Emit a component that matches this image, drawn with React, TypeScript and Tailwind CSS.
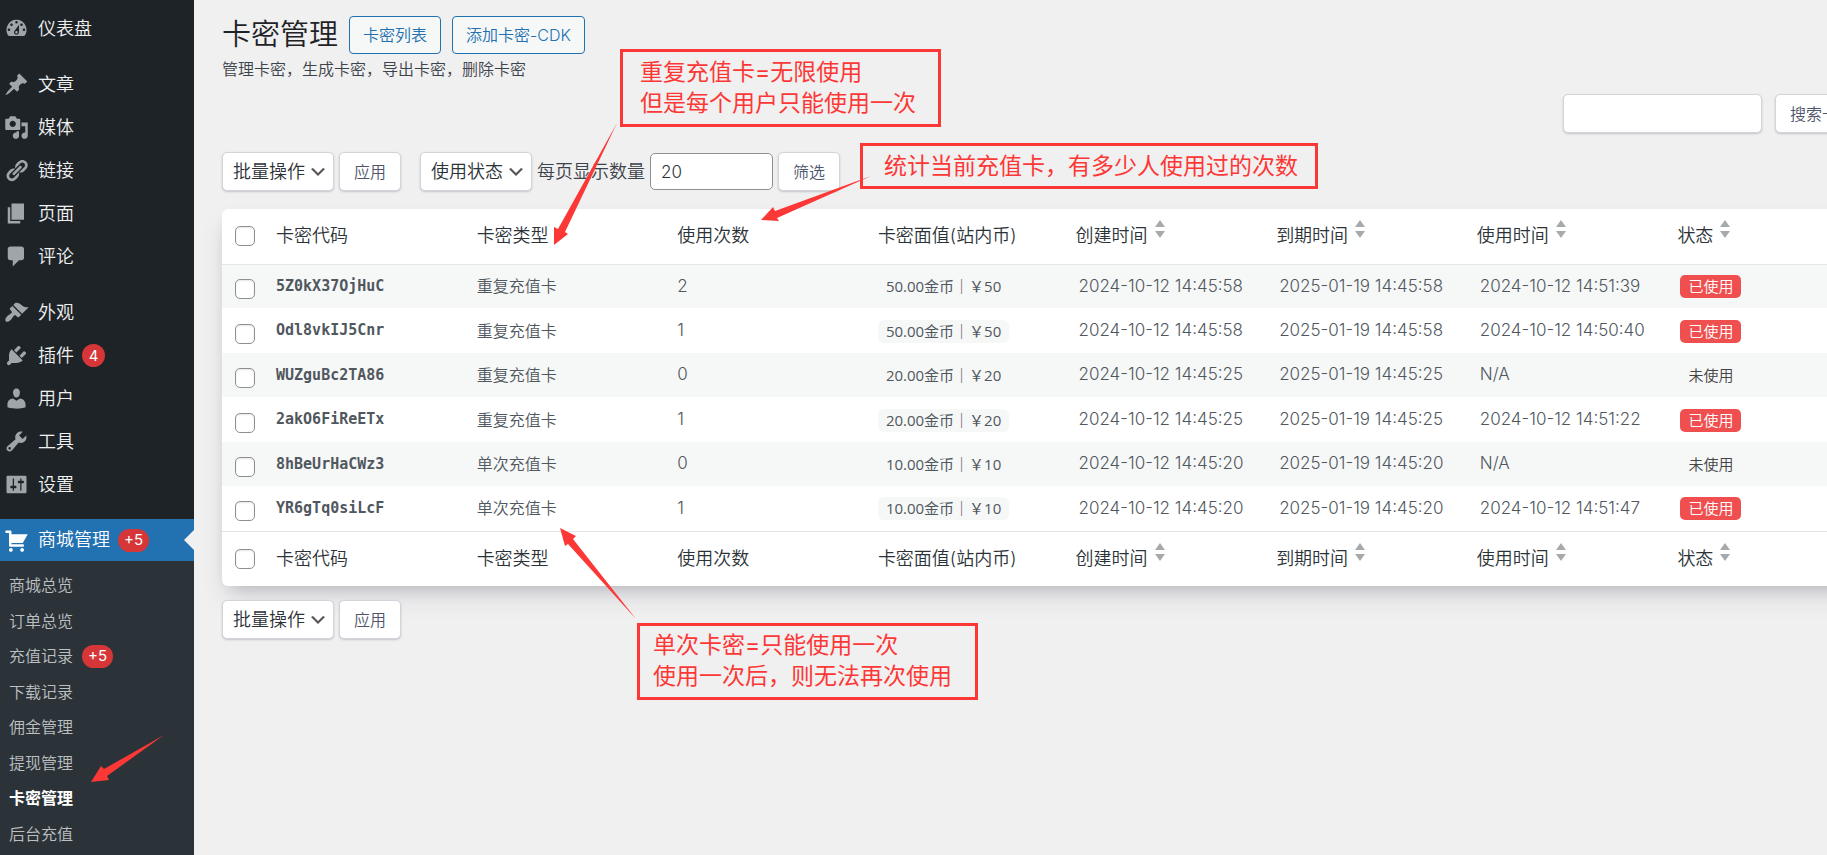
import { useState } from "react";

type MenuItem = {
  label: string;
  icon: string;
  badge?: string;
};

type CardRow = {
  code: string;
  type: string;
  count: number;
  value: string;
  created: string;
  expires: string;
  usedAt: string;
  used: boolean;
};

const icons: Record<string, string> = {
  dashboard:
    "M3.76 16h12.48A7.998 7.998 0 0010 3a7.998 7.998 0 00-6.24 13zM10 4c.55 0 1 .45 1 1s-.45 1-1 1-1-.45-1-1 .45-1 1-1zM6 6c.55 0 1 .45 1 1s-.45 1-1 1-1-.45-1-1 .45-1 1-1zm8 0c.55 0 1 .45 1 1s-.45 1-1 1-1-.45-1-1 .45-1 1-1zm-5.37 5.55L12 7v6c0 1.1-.9 2-2 2s-2-.9-2-2c0-.57.24-1.08.63-1.45zM4 10c.55 0 1 .45 1 1s-.45 1-1 1-1-.45-1-1 .45-1 1-1zm12 0c.55 0 1 .45 1 1s-.45 1-1 1-1-.45-1-1 .45-1 1-1zm-5 3c0-.55-.45-1-1-1s-1 .45-1 1 .45 1 1 1 1-.45 1-1z",
  post: "M10.44 3.02l1.82-1.82 6.36 6.35-1.83 1.82c-1.05-.68-2.48-.57-3.41.36l-.75.75c-.92.93-1.04 2.35-.35 3.41l-1.83 1.82-2.41-2.41-2.8 2.79c-.42.42-3.38 2.71-3.8 2.29s1.86-3.39 2.28-3.81l2.79-2.79L4.1 9.36l1.83-1.82c1.05.69 2.48.57 3.4-.36l.75-.75c.93-.92 1.05-2.35.36-3.41z",
  media:
    "M13 11V4c0-.55-.45-1-1-1h-1.67L9 1H5L3.67 3H2c-.55 0-1 .45-1 1v7c0 .55.45 1 1 1h10c.55 0 1-.45 1-1zM7 4.5c1.38 0 2.5 1.12 2.5 2.5S8.38 9.5 7 9.5 4.5 8.38 4.5 7 5.62 4.5 7 4.5zM14 6h5v10.5c0 1.38-1.12 2.5-2.5 2.5S14 17.88 14 16.5s1.12-2.5 2.5-2.5c.17 0 .34.02.5.05V9h-3V6zm-4 8.05V13h2v3.5c0 1.38-1.12 2.5-2.5 2.5S7 17.88 7 16.5 8.12 14 9.5 14c.17 0 .34.02.5.05z",
  links:
    "M17.74 2.76c1.68 1.69 1.68 4.41 0 6.1l-1.53 1.52c-1.12 1.12-2.7 1.47-4.14 1.09l2.62-2.61.76-.77.76-.76c.84-.84.84-2.2 0-3.04-.84-.85-2.2-.85-3.04 0l-.77.76-3.38 3.38c-.37-1.44-.02-3.02 1.1-4.14l1.52-1.53c1.69-1.68 4.42-1.68 6.1 0zM8.59 13.43l5.34-5.34c.42-.42.42-1.1 0-1.52-.44-.43-1.13-.39-1.53 0l-5.33 5.34c-.42.42-.42 1.1 0 1.52.44.43 1.13.39 1.52 0zm-.76 2.29l4.14-4.15c.38 1.44.03 3.02-1.09 4.14l-1.52 1.53c-1.69 1.68-4.41 1.68-6.1 0-1.68-1.68-1.68-4.42 0-6.1l1.53-1.52c1.12-1.12 2.7-1.47 4.14-1.1l-4.14 4.15c-.85.84-.85 2.2 0 3.05.84.84 2.2.84 3.04 0z",
  page: "M6 15V2h10v13H6zm-1 1h8v2H3V5h2v11z",
  comments:
    "M5 2h9c1.1 0 2 .9 2 2v7c0 1.1-.9 2-2 2h-2l-5 5v-5H5c-1.1 0-2-.9-2-2V4c0-1.1.9-2 2-2z",
  appearance:
    "M14.48 11.06L7.41 3.99l1.5-1.5c.5-.56 2.3-.47 3.51.32 1.21.8 1.43 1.28 2.91 2.1 1.18.64 2.45 1.26 4.45.85zm-.71.71L6.7 4.7 4.93 6.47c-.39.39-.39 1.02 0 1.41l1.06 1.06c.39.39.39 1.03 0 1.42-.6.6-1.43 1.11-2.21 1.69-.35.26-.7.53-1.01.84C1.43 14.23.4 16.08 1.4 17.07c.99 1 2.84-.03 4.18-1.36.31-.31.58-.66.85-1.02.57-.78 1.08-1.61 1.69-2.21.39-.39 1.02-.39 1.41 0l1.06 1.06c.39.39 1.02.39 1.41 0z",
  plugins:
    "M13.11 4.36L9.87 7.6 8 5.73l3.24-3.24c.35-.34 1.05-.2 1.56.32.52.51.66 1.21.31 1.55zm-8 1.77l.91-1.12 9.01 9.01-1.19.84c-.71.71-2.63 1.16-3.82 1.16H6.14L4.9 17.26c-.59.59-1.54.59-2.12 0-.59-.58-.59-1.53 0-2.12l1.24-1.24v-3.88c0-1.13.4-3.19 1.09-3.89zm7.26 3.97l3.24-3.24c.34-.35 1.04-.21 1.55.31.52.51.66 1.21.31 1.55l-3.24 3.25z",
  users:
    "M10 9.25c-2.27 0-2.73-3.44-2.73-3.44C7 4.02 7.82 2 9.97 2c2.16 0 2.98 2.02 2.71 3.81 0 0-.41 3.44-2.68 3.44zm0 2.57L12.72 10c2.39 0 4.52 2.33 4.52 4.53v2.49s-3.65 1.13-7.24 1.13c-3.65 0-7.24-1.13-7.24-1.13v-2.49c0-2.25 1.94-4.48 4.47-4.48z",
  tools:
    "M16.68 9.77c-1.34 1.34-3.3 1.67-4.95.99l-5.41 6.52c-.99.99-2.59.99-3.58 0s-.99-2.59 0-3.57l6.52-5.42c-.68-1.65-.35-3.61.99-4.95 1.28-1.28 3.12-1.62 4.72-1.06l-2.89 2.89 2.82 2.82 2.86-2.87c.53 1.58.18 3.39-1.08 4.65zM3.81 16.21c.4.39 1.04.39 1.43 0 .4-.4.4-1.04 0-1.43-.39-.4-1.03-.4-1.43 0-.39.39-.39 1.03 0 1.43z",
  settings:
    "M18 16V4c0-.55-.45-1-1-1H3c-.55 0-1 .45-1 1v12c0 .55.45 1 1 1h14c.55 0 1-.45 1-1zM8 11h1c.55 0 1 .45 1 1s-.45 1-1 1H8v1.5c0 .28-.22.5-.5.5s-.5-.22-.5-.5V13H6c-.55 0-1-.45-1-1s.45-1 1-1h1V5.5c0-.28.22-.5.5-.5s.5.22.5.5V11zm5-2h-1c-.55 0-1-.45-1-1s.45-1 1-1h1V5.5c0-.28.22-.5.5-.5s.5.22.5.5V7h1c.55 0 1 .45 1 1s-.45 1-1 1h-1v5.5c0 .28-.22.5-.5.5s-.5-.22-.5-.5V9z",
  cart: "M6 13h9c.55 0 1 .45 1 1s-.45 1-1 1H5c-.55 0-1-.45-1-1V4H2c-.55 0-1-.45-1-1s.45-1 1-1h3c.55 0 1 .45 1 1v2h13l-4 7H6v1zm-.5 3c.83 0 1.5.67 1.5 1.5S6.33 19 5.5 19 4 18.33 4 17.5 4.67 16 5.5 16zm9 0c.83 0 1.5.67 1.5 1.5s-.67 1.5-1.5 1.5-1.5-.67-1.5-1.5.67-1.5 1.5-1.5z",
};

const menuGroups: MenuItem[][] = [
  [{ label: "仪表盘", icon: "dashboard" }],
  [
    { label: "文章", icon: "post" },
    { label: "媒体", icon: "media" },
    { label: "链接", icon: "links" },
    { label: "页面", icon: "page" },
    { label: "评论", icon: "comments" },
  ],
  [
    { label: "外观", icon: "appearance" },
    { label: "插件", icon: "plugins", badge: "4" },
    { label: "用户", icon: "users" },
    { label: "工具", icon: "tools" },
    { label: "设置", icon: "settings" },
  ],
];

const shopMenu = [
  { label: "商城总览" },
  { label: "订单总览" },
  { label: "充值记录", badge: "+5" },
  { label: "下载记录" },
  { label: "佣金管理" },
  { label: "提现管理" },
  { label: "卡密管理", current: true },
  { label: "后台充值" },
];

const rows: CardRow[] = [
  { code: "5Z0kX37OjHuC", type: "重复充值卡", count: 2, value: "50.00金币｜￥50", created: "2024-10-12 14:45:58", expires: "2025-01-19 14:45:58", usedAt: "2024-10-12 14:51:39", used: true },
  { code: "Odl8vkIJ5Cnr", type: "重复充值卡", count: 1, value: "50.00金币｜￥50", created: "2024-10-12 14:45:58", expires: "2025-01-19 14:45:58", usedAt: "2024-10-12 14:50:40", used: true },
  { code: "WUZguBc2TA86", type: "重复充值卡", count: 0, value: "20.00金币｜￥20", created: "2024-10-12 14:45:25", expires: "2025-01-19 14:45:25", usedAt: "N/A", used: false },
  { code: "2akO6FiReETx", type: "重复充值卡", count: 1, value: "20.00金币｜￥20", created: "2024-10-12 14:45:25", expires: "2025-01-19 14:45:25", usedAt: "2024-10-12 14:51:22", used: true },
  { code: "8hBeUrHaCWz3", type: "单次充值卡", count: 0, value: "10.00金币｜￥10", created: "2024-10-12 14:45:20", expires: "2025-01-19 14:45:20", usedAt: "N/A", used: false },
  { code: "YR6gTq0siLcF", type: "单次充值卡", count: 1, value: "10.00金币｜￥10", created: "2024-10-12 14:45:20", expires: "2025-01-19 14:45:20", usedAt: "2024-10-12 14:51:47", used: true },
];

const columns = [
  { label: "卡密代码", sortable: false },
  { label: "卡密类型", sortable: false },
  { label: "使用次数", sortable: false },
  { label: "卡密面值(站内币)", sortable: false },
  { label: "创建时间", sortable: true },
  { label: "到期时间", sortable: true },
  { label: "使用时间", sortable: true },
  { label: "状态", sortable: true },
];

const checkboxClass =
  "block size-5 appearance-none rounded-[5px] border border-[#8c8f94] bg-white shadow-[inset_0_1px_2px_rgba(0,0,0,0.1)] checked:bg-[#2271b1]";

const controlClass =
  "h-[39px] rounded-[5px] border border-[#d3d4da] bg-white shadow-[0_1px_2px_rgba(60,66,87,0.25)]";

function MenuIcon({ name }: { name: string }) {
  return (
    <svg viewBox="0 0 20 20" className="size-[25px] shrink-0" fill="currentColor" fillRule="evenodd" aria-hidden="true">
      <path d={icons[name]} />
    </svg>
  );
}

function Badge({ children }: { children: string }) {
  return (
    <span className="flex h-[23px] min-w-[23px] items-center justify-center rounded-full bg-[#d63638] px-[6px] text-[15px] font-normal text-white">
      {children}
    </span>
  );
}

function Sidebar() {
  return (
    <nav className="w-[194px] shrink-0 bg-[#1d2327] pt-[7px] text-[#f0f0f1]">
      {menuGroups.map((group) => (
        <ul key={group[0].label} className="mb-[13px]">
          {group.map((item) => (
            <li key={item.label}>
              <a href="#" className="flex h-[43px] items-center pl-1 text-lg">
                <span className="text-[#a0a5aa]">
                  <MenuIcon name={item.icon} />
                </span>
                <span className="ml-[9px] mr-2">{item.label}</span>
                {item.badge ? <Badge>{item.badge}</Badge> : null}
              </a>
            </li>
          ))}
        </ul>
      ))}
      <a href="#" className="flex h-[42px] items-center bg-[#2271b1] pl-1 text-lg text-white">
        <MenuIcon name="cart" />
        <span className="ml-[9px] mr-2">商城管理</span>
        <Badge>+5</Badge>
        <svg viewBox="0 0 10 20" className="ml-auto h-5 w-[10px]" aria-hidden="true">
          <path d="M10 0v20L0 10z" fill="#f0f0f0" />
        </svg>
      </a>
      <ul className="bg-[#2c3338] pt-[6px] pb-1">
        {shopMenu.map((item) => (
          <li key={item.label} className="odd:h-9 even:h-[35px]">
            <a
              href="#"
              className={`flex h-full items-center gap-[9px] pl-[9px] text-base ${item.current ? "font-bold text-white" : "text-[#bdc0c3]"}`}
            >
              {item.label}
              {item.badge ? <Badge>{item.badge}</Badge> : null}
            </a>
          </li>
        ))}
      </ul>
    </nav>
  );
}

function Select({ label, options }: { label: string; options: string[] }) {
  return (
    <div className="relative">
      <select aria-label={label} className={`${controlClass} w-28 appearance-none pl-[10px] text-lg leading-6 text-[#2c3338]`}>
        {options.map((option) => (
          <option key={option}>{option}</option>
        ))}
      </select>
      <svg viewBox="0 0 20 20" className="pointer-events-none absolute top-[10px] right-[6px] size-5" aria-hidden="true">
        <path d="M5 6l5 5 5-5 2 1-7 7-7-7 2-1z" fill="#555" />
      </svg>
    </div>
  );
}

function Button({ children }: { children: string }) {
  return (
    <button type="button" className={`${controlClass} px-[14px] text-base text-[#4f566b]`}>
      {children}
    </button>
  );
}

function BulkActions() {
  return (
    <div className="flex items-center gap-[5px]">
      <Select label="选择批量操作" options={["批量操作", "删除"]} />
      <Button>应用</Button>
    </div>
  );
}

function HeaderCells({ position }: { position: string }) {
  return (
    <tr className="h-[55px]">
      <td className="pl-[13px]">
        <input type="checkbox" aria-label={`全选${position}`} className={checkboxClass} />
      </td>
      {columns.map((col) => (
        <th
          key={col.label}
          scope="col"
          className={`text-left text-lg leading-8 font-[350] whitespace-nowrap text-[#2c3338] ${col.sortable ? "pl-[7px]" : "pl-[10px]"}`}
        >
          {col.sortable ? (
            <a href="#" className="flex gap-[7px]">
              {col.label}
              <svg viewBox="0 0 10 18" className="h-[18px] w-[10px]" fill="#a7aaad" aria-hidden="true">
                <path d="M5 0l5 7H0zM0 11h10l-5 7z" />
              </svg>
            </a>
          ) : (
            col.label
          )}
        </th>
      ))}
    </tr>
  );
}

function CardTable() {
  return (
    <table className="w-full table-fixed border-collapse text-base text-[#50575e]">
      <colgroup>
        <col className="w-11" />
        <col className="w-[12.5%]" />
        <col className="w-[12.5%]" />
        <col className="w-[12.5%]" />
        <col className="w-[12.5%]" />
        <col className="w-[12.5%]" />
        <col className="w-[12.5%]" />
        <col className="w-[12.5%]" />
        <col />
      </colgroup>
      <thead className="border-b border-[#e3e5e8]">
        <HeaderCells position="顶部" />
      </thead>
      <tbody>
        {rows.map((row) => (
          <tr key={row.code} className="odd:h-11 odd:bg-[#f6f7f7] even:h-[45px]">
            <td className="pt-[6px] pl-[13px]">
              <input type="checkbox" aria-label={`选择 ${row.code}`} className={checkboxClass} />
            </td>
            <td className="pl-[10px] font-['DejaVu_Sans_Mono',monospace] text-[15px] font-bold">{row.code}</td>
            <td className="pl-[10px]">{row.type}</td>
            <td className="pl-[10px] text-[17px]">{row.count}</td>
            <td className="pl-[10px] whitespace-nowrap">
              <span className="inline-block rounded-md bg-[#f6f7f7] px-2 font-['Open_Sans','Noto_Sans_CJK_SC',sans-serif] text-[15px] leading-[23px] font-normal text-[#50575e]">
                {row.value}
              </span>
            </td>
            <td className="pl-[10px] text-[17px] whitespace-nowrap">{row.created}</td>
            <td className="pl-[10px] text-[17px] whitespace-nowrap">{row.expires}</td>
            <td className="pl-[10px] text-[17px] whitespace-nowrap">{row.usedAt}</td>
            <td className="pl-[10px] whitespace-nowrap">
              <span
                className={`inline-block rounded-[5px] px-2 text-[15px] leading-[23px] ${row.used ? "bg-[#f04f50] text-white" : "text-[#444]"}`}
              >
                {row.used ? "已使用" : "未使用"}
              </span>
            </td>
          </tr>
        ))}
      </tbody>
      <tfoot className="border-t border-[#e3e5e8]">
        <HeaderCells position="底部" />
      </tfoot>
    </table>
  );
}

// red marker notes drawn above the page
function Notes() {
  return (
    <div className="pointer-events-none absolute inset-0 text-[23px] leading-[31px] font-normal whitespace-nowrap text-[#fc3837]">
      <svg className="absolute inset-0 size-full" fill="#fc3837" aria-hidden="true">
        <path d="M617 123L565 232L568 234L554 245V227L558 229Z" />
        <path d="M871 176L777 218L779 221L761 220L773 207L775 211Z" />
        <path d="M636 619L568 544L565 546L560 528L576 536L573 539Z" />
        <path d="M164 735L107 776L109 780L91 782L101 766L104 769Z" />
      </svg>
      <p className="absolute top-[49px] left-[620px] w-[321px] border-3 border-[#fc3837] py-[5px] pl-[17px]">
        重复充值卡=无限使用
        <br />
        但是每个用户只能使用一次
      </p>
      <p className="absolute top-[143px] left-[860px] w-[458px] border-3 border-[#fc3837] pt-[5px] pb-1 pl-[21px]">
        统计当前充值卡，有多少人使用过的次数
      </p>
      <p className="absolute top-[623px] left-[637px] w-[341px] border-3 border-[#fc3837] pt-1 pb-[5px] pl-[13px]">
        单次卡密=只能使用一次
        <br />
        使用一次后，则无法再次使用
      </p>
    </div>
  );
}

export default function App() {
  const [perPage, setPerPage] = useState("20");
  const [keyword, setKeyword] = useState("");

  return (
    <div className="relative flex min-h-screen overflow-hidden bg-[#f0f0f0] font-['Inter','Noto_Sans_CJK_SC',sans-serif] font-[350]">
      <Sidebar />
      <main className="min-w-0 flex-1 overflow-hidden pt-4 pl-7">
        <div className="flex items-center gap-[11px] text-[#2271b1]">
          <h1 className="text-[29px] leading-[38px] whitespace-nowrap text-[#1d2327]">卡密管理</h1>
          <a href="#" className="rounded border border-[#2271b1] bg-[#f6f7f7] px-[13px] text-base leading-9">卡密列表</a>
          <a href="#" className="rounded border border-[#2271b1] bg-[#f6f7f7] px-[13px] text-base leading-9">添加卡密-CDK</a>
        </div>
        <p className="mt-[3px] text-base text-[#3c434a]">管理卡密，生成卡密，导出卡密，删除卡密</p>

        <form className="mt-[13px] -mr-[42px] flex h-10 justify-end gap-[13px]" onSubmit={(e) => e.preventDefault()}>
          <input
            type="search"
            aria-label="搜索卡密"
            value={keyword}
            onChange={(e) => setKeyword(e.target.value)}
            className={`${controlClass} w-[199px] px-3`}
          />
          <Button>搜索卡密</Button>
        </form>

        <div className="mt-[18px] flex items-center">
          <BulkActions />
          <div className="ml-[19px] flex items-center gap-[5px]">
            <Select label="使用状态" options={["使用状态", "已使用", "未使用"]} />
            <label htmlFor="per-page" className="text-lg whitespace-nowrap text-[#3c434a]">每页显示数量</label>
            <input
              id="per-page"
              type="text"
              value={perPage}
              onChange={(e) => setPerPage(e.target.value)}
              className="h-[37px] w-[123px] rounded-[5px] border border-[#8c8f94] bg-white px-[10px] text-[17px] text-[#2c3338]"
            />
            <Button>筛选</Button>
          </div>
        </div>

        <div className="mt-[18px] -mr-10 overflow-hidden rounded-md bg-white pr-10 shadow-[0_13px_27px_-5px_rgba(50,50,93,0.15),0_8px_16px_-8px_rgba(0,0,0,0.2)]">
          <CardTable />
        </div>

        <div className="mt-[14px]">
          <BulkActions />
        </div>
      </main>
      <Notes />
    </div>
  );
}
